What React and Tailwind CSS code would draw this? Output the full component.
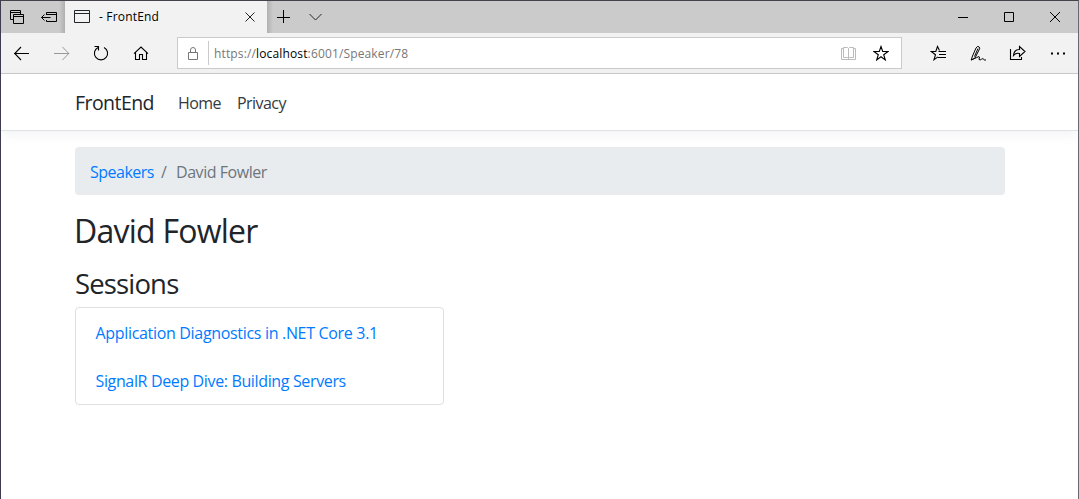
import React from "react";

function Icon({ w, h, className = "", children }) {
  return (
    <svg width={w} height={h} viewBox={`0 0 ${w} ${h}`} fill="none" stroke="currentColor" strokeWidth="1" className={`block shrink-0 ${className}`}>
      {children}
    </svg>
  );
}

function TitleBar() {
  return (
    <div className="flex h-8 bg-[#cbcbcb]">
      <div className="flex w-16 shrink-0 bg-[linear-gradient(to_left,#b0b0b0,#cbcbcb_6px)] pt-[8px] pl-[8px] text-black">
        <Icon w={16} h={16}>
          <path d="M4 10.500H1.500v-9h10V5M1.500 3.500h10" />
          <path d="M4.500 5.500h10v9h-10zM4.500 7.500h10" />
        </Icon>
        <Icon w={17} h={16} className="ml-[16px]">
          <path d="M5.500 6V3.500h10v9h-10V11M5.500 5.500h10M.5 8.500h9M3.500 5.500l-3 3 3 3" />
        </Icon>
      </div>
      <div className="flex w-[202px] shrink-0 bg-[#f2f2f2]">
        <Icon w={17} h={14} className="mt-[9px] ml-[9px]">
          <path d="M.5 .5h15v12H.5zM.5 3.500h15" />
        </Icon>
        <span className="mt-[7px] ml-[8px] w-[124px] text-[12px] leading-[18px] tracking-[0.18px] text-black">- FrontEnd</span>
        <Icon w={12} h={12} className="mt-[10px] ml-[21px]">
          <path d="M1.500 1.500l9 9M10.500 1.500l-9 9" />
        </Icon>
      </div>
      <div className="flex flex-1 bg-[linear-gradient(to_right,#b0b0b0,#cbcbcb_6px)]">
        <Icon w={14} h={14} className="mt-[9px] ml-[10px] text-black">
          <path d="M6.500 0v13M0 7.500h13" />
        </Icon>
        <Icon w={14} h={8} className="mt-[12px] ml-[18px]">
          <path d="M.5 1l6 6 6-6" />
        </Icon>
      </div>
      <div className="flex w-[120px] shrink-0">
        <Icon w={10} h={10} className="mt-[11px] text-black"><path d="M0 5.500h10" /></Icon>
        <Icon w={10} h={10} className="mt-[11px] ml-[36px] text-black"><path d="M.5 .5h9v9h-9z" /></Icon>
        <Icon w={10} h={10} className="mt-[11px] ml-[36px] text-black"><path d="M0 0l10 10M10 0L0 10" /></Icon>
      </div>
    </div>
  );
}

function ToolBar() {
  return (
    <div className="flex h-[41px] border-b border-[#cacaca] bg-[#f2f2f2] text-black">
      <div className="flex w-44 shrink-0 items-start pt-[12px] pl-[13px]">
        <Icon w={16} h={16}><path d="M0 8.500h15M7 2L.7 8.500 7 15" strokeWidth="1.1" /></Icon>
        <Icon w={16} h={16} className="ml-[24px] text-[#999]"><path d="M0 8.500h15M8.500 2l6.300 6.500L8.500 15" /></Icon>
        <Icon w={16} h={16} className="ml-[23px]">
          <path d="M5 2.400A6.600 6.600 0 1 0 11 2.400M1.500 1.500h4v4" strokeWidth="1.100" />
        </Icon>
        <Icon w={16} h={16} className="ml-[24px]">
          <path d="M1 8.700L8 2l7 6.700M2.500 7.500v7h4v-5h3v5h4v-7" strokeWidth="1.100" />
        </Icon>
      </div>
      <div className="mt-1 flex h-8 w-[725px] shrink-0 border border-[#cacaca] bg-white">
        <Icon w={12} h={16} className="mt-[8px] ml-[9px] text-[#777]">
          <path d="M1.500 6.500h9v7h-9zM3.500 6.500V4a2.500 2.500 0 0 1 5 0v2.500" />
        </Icon>
        <div className="mt-[3px] ml-[9px] h-6 w-px bg-[#cacaca]" />
        <div className="mt-[7px] ml-[5px] w-[620px] text-[12px] leading-[18px] tracking-[0.14px] text-[#777]">
          https://<span className="text-black">localhost</span>:6001/Speaker/78
        </div>
        <Icon w={16} h={16} className="mt-[8px] ml-[7px] text-[#bbb]">
          <path d="M2.500 2.500H.5v11h14v-11h-2M2.500 1.500h4l1 1v10l-1-1h-4zM7.500 2.500l1-1h4v10h-4l-1 1z" />
        </Icon>
        <Icon w={16} h={16} className="mt-[7px] ml-[16px]">
          <path d="M8 1.500l1.700 5h5.300l-4.300 3.200 1.600 5.200L8 11.700l-4.300 3.200 1.600-5.200L1 6.500h5.300z" strokeWidth="1.100" />
        </Icon>
      </div>
      <div className="flex pt-[12px] pl-[28px]">
        <Icon w={17} h={16}>
          <path d="M9.500 5.500L7.500 1.500l-1.700 5H1.300L5.500 9.700l-1.500 5 4-2.800M8.500 6.500H16M9 9.500h7M8 12.500h8" strokeWidth="1.100" />
        </Icon>
        <Icon w={18} h={17} className="ml-[23px]">
          <path d="M1.200 15L2.500 11 6 3Q7.500 .5 9 1.800T9 5L5 13 1.200 15M4.500 11.500L8 3.500M1.200 15Q8 12 9 11.500t0 3q1 1 2.500-.3t2.500.3 2 .2" />
        </Icon>
        <Icon w={17} h={16} className="ml-[21px]">
          <path d="M1.500 4v10.500h11V12M4.500 10.500Q5 4.500 10.500 4.500V1.500L16 6.500 10.500 11.500v-3Q7 7.500 4.500 10.500z" strokeWidth="1.100" />
        </Icon>
        <Icon w={16} h={16} className="ml-[24px]">
          <path d="M1 8.500h2M7 8.500h2M13 8.500h2" strokeWidth="2" />
        </Icon>
      </div>
    </div>
  );
}

export default function App() {
  return (
    <div className="flex h-[499px] w-[1079px] flex-col overflow-hidden border-t border-r border-l border-t-[#46424b] border-r-[#686870] border-l-[#3c3c4e] bg-white font-['Open_Sans','Noto_Sans',sans-serif] text-[#212529]">
      <TitleBar />
      <ToolBar />
      <nav className="flex h-[57px] shrink-0 items-center border-b border-[#dee2e6] pt-[1px] pl-[74px] shadow-[0_4px_12px_rgba(0,0,0,0.05)]">
        <a className="w-[103px] text-[19.5px] leading-[30px] tracking-[-0.55px]">FrontEnd</a>
        <a className="w-[59px] text-[16px] leading-6 tracking-[-0.6px] text-[#343a40]">Home</a>
        <a className="text-[16px] leading-6 tracking-[-0.55px] text-[#343a40]">Privacy</a>
      </nav>
      <main className="flex flex-col items-start pt-[16px] pl-[74px]">
        <div className="flex h-12 w-[930px] items-center rounded bg-[#e9ecef] pt-[2px] pl-[15px] text-[16px] tracking-[-0.5px] text-[#6c757d]">
          <a className="w-[71px] text-[#007bff]">Speakers</a>
          <span className="w-[15px]">/</span>
          <span className="tracking-[-0.45px]">David Fowler</span>
        </div>
        <h2 className="-ml-px mt-[17px] text-[32px] leading-[38px] tracking-[-0.75px]">David Fowler</h2>
        <h3 className="mt-[17px] text-[27.5px] leading-[34px] tracking-[-0.85px]">Sessions</h3>
        <ul className="mt-[6px] h-[98px] w-[369px] rounded border border-[#dfdfdf] pl-[19.5px] text-[16px] text-[#007bff]">
          <li className="pt-[13px] leading-6 tracking-[-0.32px]">Application Diagnostics in .NET Core 3.1</li>
          <li className="pt-[24px] leading-6 tracking-[-0.36px]">SignalR Deep Dive: Building Servers</li>
        </ul>
      </main>
    </div>
  );
}
